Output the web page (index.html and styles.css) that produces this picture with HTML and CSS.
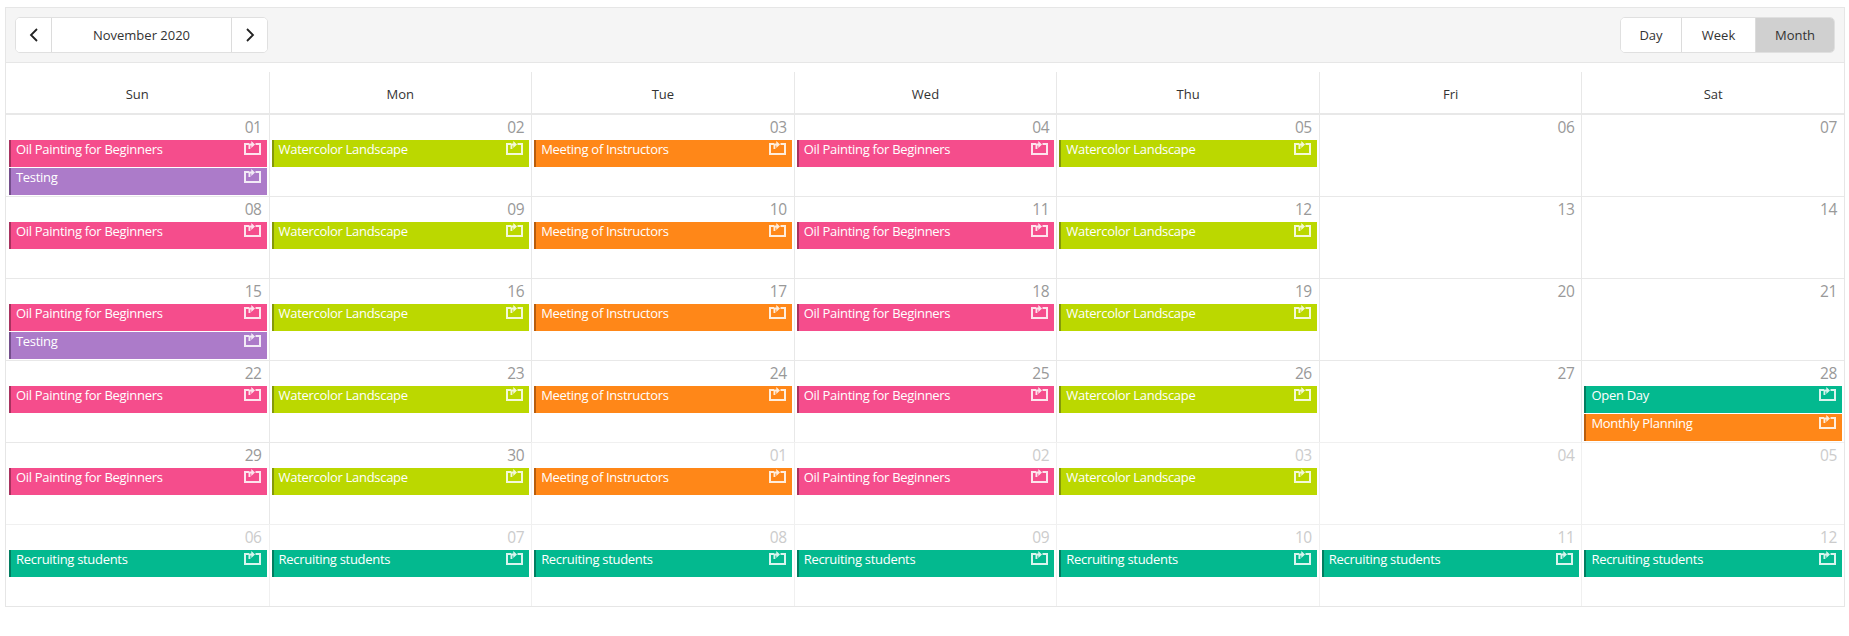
FILE: index.html
```html
<!DOCTYPE html>
<html lang="en">
<head>
<meta charset="utf-8">
<title>Scheduler</title>
<link rel="stylesheet" href="styles.css">
</head>
<body>
<svg class="defs" width="0" height="0" aria-hidden="true"><defs>
<symbol id="rec" viewBox="0 0 17 15"><path d="M5 3H1V13H16V3H11.5" fill="none" stroke="currentColor" stroke-width="2"/><path d="M4.5 2.4H7.3V0L11 3.5L7.3 7V4.5H6.4V8H4.5Z" fill="currentColor"/></symbol>
</defs></svg>
<div class="scheduler">
<div class="toolbar">
<div class="nav">
<button class="btn arrow first"><svg width="10" height="16" viewBox="0 0 10 16"><path d="M8 2L2 8L8 14" fill="none" stroke="#222" stroke-width="1.8"/></svg></button>
<button class="btn period">November 2020</button>
<button class="btn arrow"><svg width="10" height="16" viewBox="0 0 10 16"><path d="M2 2L8 8L2 14" fill="none" stroke="#222" stroke-width="1.8"/></svg></button>
</div>
<div class="views">
<button class="btn day">Day</button>
<button class="btn week">Week</button>
<button class="btn month">Month</button>
</div>
</div>
<div class="head">
<div class="hcell">Sun</div><div class="hcell">Mon</div><div class="hcell">Tue</div><div class="hcell">Wed</div><div class="hcell">Thu</div><div class="hcell">Fri</div><div class="hcell">Sat</div>
</div>
<div class="grid">
<div class="cell"><div class="num">01</div><div class="ev pink"><span>Oil Painting for Beginners</span><svg class="ic"><use href="#rec"/></svg></div><div class="ev purple"><span>Testing</span><svg class="ic"><use href="#rec"/></svg></div></div>
<div class="cell"><div class="num">02</div><div class="ev lime"><span>Watercolor Landscape</span><svg class="ic"><use href="#rec"/></svg></div></div>
<div class="cell"><div class="num">03</div><div class="ev orange"><span>Meeting of Instructors</span><svg class="ic"><use href="#rec"/></svg></div></div>
<div class="cell"><div class="num">04</div><div class="ev pink"><span>Oil Painting for Beginners</span><svg class="ic"><use href="#rec"/></svg></div></div>
<div class="cell"><div class="num">05</div><div class="ev lime"><span>Watercolor Landscape</span><svg class="ic"><use href="#rec"/></svg></div></div>
<div class="cell"><div class="num">06</div></div>
<div class="cell"><div class="num">07</div></div>

<div class="cell"><div class="num">08</div><div class="ev pink"><span>Oil Painting for Beginners</span><svg class="ic"><use href="#rec"/></svg></div></div>
<div class="cell"><div class="num">09</div><div class="ev lime"><span>Watercolor Landscape</span><svg class="ic"><use href="#rec"/></svg></div></div>
<div class="cell"><div class="num">10</div><div class="ev orange"><span>Meeting of Instructors</span><svg class="ic"><use href="#rec"/></svg></div></div>
<div class="cell"><div class="num">11</div><div class="ev pink"><span>Oil Painting for Beginners</span><svg class="ic"><use href="#rec"/></svg></div></div>
<div class="cell"><div class="num">12</div><div class="ev lime"><span>Watercolor Landscape</span><svg class="ic"><use href="#rec"/></svg></div></div>
<div class="cell"><div class="num">13</div></div>
<div class="cell"><div class="num">14</div></div>

<div class="cell"><div class="num">15</div><div class="ev pink"><span>Oil Painting for Beginners</span><svg class="ic"><use href="#rec"/></svg></div><div class="ev purple"><span>Testing</span><svg class="ic"><use href="#rec"/></svg></div></div>
<div class="cell"><div class="num">16</div><div class="ev lime"><span>Watercolor Landscape</span><svg class="ic"><use href="#rec"/></svg></div></div>
<div class="cell"><div class="num">17</div><div class="ev orange"><span>Meeting of Instructors</span><svg class="ic"><use href="#rec"/></svg></div></div>
<div class="cell"><div class="num">18</div><div class="ev pink"><span>Oil Painting for Beginners</span><svg class="ic"><use href="#rec"/></svg></div></div>
<div class="cell"><div class="num">19</div><div class="ev lime"><span>Watercolor Landscape</span><svg class="ic"><use href="#rec"/></svg></div></div>
<div class="cell"><div class="num">20</div></div>
<div class="cell"><div class="num">21</div></div>

<div class="cell"><div class="num">22</div><div class="ev pink"><span>Oil Painting for Beginners</span><svg class="ic"><use href="#rec"/></svg></div></div>
<div class="cell"><div class="num">23</div><div class="ev lime"><span>Watercolor Landscape</span><svg class="ic"><use href="#rec"/></svg></div></div>
<div class="cell"><div class="num">24</div><div class="ev orange"><span>Meeting of Instructors</span><svg class="ic"><use href="#rec"/></svg></div></div>
<div class="cell"><div class="num">25</div><div class="ev pink"><span>Oil Painting for Beginners</span><svg class="ic"><use href="#rec"/></svg></div></div>
<div class="cell"><div class="num">26</div><div class="ev lime"><span>Watercolor Landscape</span><svg class="ic"><use href="#rec"/></svg></div></div>
<div class="cell"><div class="num">27</div></div>
<div class="cell"><div class="num">28</div><div class="ev green"><span>Open Day</span><svg class="ic"><use href="#rec"/></svg></div><div class="ev orange"><span>Monthly Planning</span><svg class="ic"><use href="#rec"/></svg></div></div>

<div class="cell"><div class="num">29</div><div class="ev pink"><span>Oil Painting for Beginners</span><svg class="ic"><use href="#rec"/></svg></div></div>
<div class="cell"><div class="num">30</div><div class="ev lime"><span>Watercolor Landscape</span><svg class="ic"><use href="#rec"/></svg></div></div>
<div class="cell other"><div class="num">01</div><div class="ev orange"><span>Meeting of Instructors</span><svg class="ic"><use href="#rec"/></svg></div></div>
<div class="cell other"><div class="num">02</div><div class="ev pink"><span>Oil Painting for Beginners</span><svg class="ic"><use href="#rec"/></svg></div></div>
<div class="cell other"><div class="num">03</div><div class="ev lime"><span>Watercolor Landscape</span><svg class="ic"><use href="#rec"/></svg></div></div>
<div class="cell other"><div class="num">04</div></div>
<div class="cell other"><div class="num">05</div></div>

<div class="cell other"><div class="num">06</div><div class="ev green"><span>Recruiting students</span><svg class="ic"><use href="#rec"/></svg></div></div>
<div class="cell other"><div class="num">07</div><div class="ev green"><span>Recruiting students</span><svg class="ic"><use href="#rec"/></svg></div></div>
<div class="cell other"><div class="num">08</div><div class="ev green"><span>Recruiting students</span><svg class="ic"><use href="#rec"/></svg></div></div>
<div class="cell other"><div class="num">09</div><div class="ev green"><span>Recruiting students</span><svg class="ic"><use href="#rec"/></svg></div></div>
<div class="cell other"><div class="num">10</div><div class="ev green"><span>Recruiting students</span><svg class="ic"><use href="#rec"/></svg></div></div>
<div class="cell other"><div class="num">11</div><div class="ev green"><span>Recruiting students</span><svg class="ic"><use href="#rec"/></svg></div></div>
<div class="cell other"><div class="num">12</div><div class="ev green"><span>Recruiting students</span><svg class="ic"><use href="#rec"/></svg></div></div>
</div>
</div>
</body>
</html>
```
FILE: styles.css
```css
* { box-sizing: border-box; }
html, body { margin: 0; background: #fff; }
body { padding: 7px 4px 0 5px; font-family: "Open Sans", "Noto Sans", sans-serif; color: #333; height: 636px; overflow: hidden; }
.defs { position: absolute; }
.scheduler { border: 1px solid #e6e6e6; display: flex; flex-direction: column; }
.toolbar { height: 55px; flex: none; background: #f5f5f5; border-bottom: 1px solid #e6e6e6; display: flex; justify-content: space-between; align-items: center; padding: 0 9px; }
.nav, .views { display: flex; height: 36px; border: 1px solid #e0e0e0; border-radius: 5px; overflow: hidden; background: #fff; }
.btn { border: 0; background: #fff; font: inherit; font-size: 13px; color: #333; padding: 0; display: flex; align-items: center; justify-content: center; border-right: 1px solid #dcdcdc; }
.btn:last-child { border-right: 0; }
.arrow { width: 35px; }
.arrow.first { width: 36px; }
.period { width: 180px; }
.day { width: 61px; }
.week { width: 74px; }
.month { width: 78px; background: #d0d0d0; }
.head { height: 51px; flex: none; display: grid; grid-template-columns: repeat(7, 1fr); border-bottom: 1px solid #e8e8e8; padding-top: 9px; }
.hcell { display: flex; align-items: center; justify-content: center; font-size: 13px; border-left: 1px solid #e8e8e8; padding-top: 2px; }
.hcell:first-child { border-left: 0; }
.grid { display: grid; grid-template-columns: repeat(7, 1fr); grid-template-rows: repeat(6, 82px); }
.cell { border-left: 1px solid #e8e8e8; border-top: 1px solid #e8e8e8; padding: 0 2px; display: flex; flex-direction: column; min-width: 0; }
.cell:nth-child(7n+1) { border-left: 0; padding-left: 3px; }
.num { height: 25px; flex: none; text-align: right; font-size: 15.5px; letter-spacing: -.4px; line-height: 24px; color: #999; padding-right: 5px; }
.other .num { color: #ccc; }
.other { border-color: #f0f0f0; }
.ev { height: 27px; flex: none; margin-bottom: 1px; border-left: 2px solid; color: #fff; font-size: 13px; letter-spacing: -.3px; line-height: 18px; padding: 0 6px 0 5px; display: flex; justify-content: space-between; white-space: nowrap; overflow: hidden; }
.ic { width: 17px; height: 15px; flex: none; margin-top: 1px; opacity: .85; }
.pink { background: #f54d8c; border-color: #a8325f; }
.lime { background: #bbd800; border-color: #84990a; }
.orange { background: #ff8718; border-color: #b85d0c; }
.purple { background: #ac7bc9; border-color: #744f8c; }
.green { background: #03b98f; border-color: #027d60; }
```
